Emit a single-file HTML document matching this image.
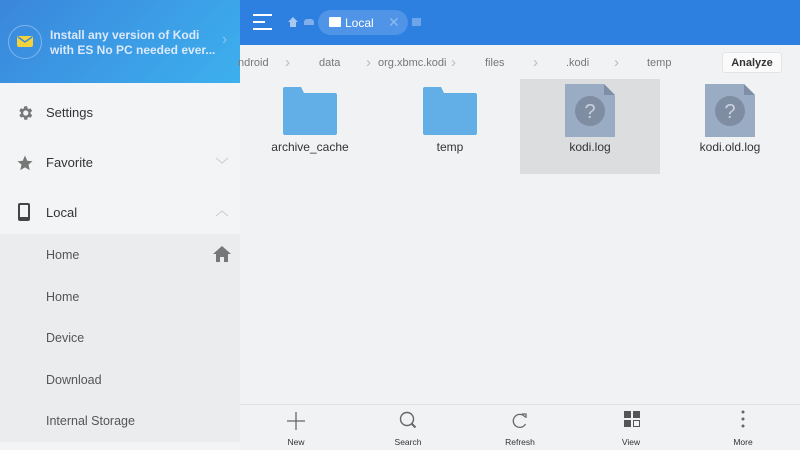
<!DOCTYPE html>
<html><head><style>
*{margin:0;padding:0;box-sizing:border-box}
body{width:800px;height:450px;overflow:hidden;font-family:"Liberation Sans",sans-serif;background:#f1f2f4;position:relative}
.abs{position:absolute}
#side{left:0;top:0;width:240px;height:450px;background:#f3f4f6}
#banner{left:0;top:0;width:240px;height:83px;background:linear-gradient(135deg,#3a86dc,#3db0ee)}
.item{position:absolute;left:0;width:240px;font-size:13px;color:#333}
.sub{position:absolute;left:0;width:240px;height:42px;background:#ebecee;color:#555;font-size:12.5px;padding-left:46px;line-height:42px}
#top{left:240px;top:0;width:560px;height:45px;background:#2d7fe0}
.crumb{position:absolute;top:57px;font-size:11px;color:#777}
.ch{position:absolute;top:54px;font-size:15px;color:#bbb}
.lbl{position:absolute;font-size:12px;color:#333;text-align:center;width:140px}
.btm{position:absolute;top:437px;font-size:8.5px;color:#333;width:60px;text-align:center}
</style></head><body>
<div id="side" class="abs"></div>
<div id="banner" class="abs">
 <div class="abs" style="left:8px;top:25px;width:34px;height:34px;border-radius:50%;border:1px solid rgba(255,255,255,.35)"></div>
 <div class="abs" style="left:17px;top:36px;width:16px;height:11px;background:#f2d33c;border-radius:2px"></div>
 <svg class="abs" style="left:17px;top:36px" width="16" height="11"><path d="M1 1 L8 6 L15 1" stroke="#3a86dc" stroke-width="1.4" fill="none"/></svg>
 <div class="abs" style="left:50px;top:28px;color:#dbe9fb;font-size:12px;font-weight:bold;line-height:15px">Install any version of Kodi<br>with ES No PC needed ever...</div>
 <div class="abs" style="left:222px;top:31px;color:#8cc3ef;font-size:16px">›</div>
</div>
<svg class="abs" style="left:16px;top:104px" width="18" height="18" viewBox="0 0 24 24"><path fill="#777" d="M19.4 13a7.5 7.5 0 000-2l2.1-1.6-2-3.5-2.5 1a7 7 0 00-1.7-1L15 3h-4l-.4 2.7a7 7 0 00-1.7 1l-2.5-1-2 3.5L6.6 11a7.5 7.5 0 000 2l-2.1 1.6 2 3.5 2.5-1a7 7 0 001.7 1L11 21h4l.4-2.7a7 7 0 001.7-1l2.5 1 2-3.5zM13 15.5a3.5 3.5 0 110-7 3.5 3.5 0 010 7z"/></svg>
<div class="item" style="top:105px;left:46px">Settings</div>
<svg class="abs" style="left:16px;top:154px" width="18" height="18" viewBox="0 0 24 24"><path fill="#777" d="M12 2l3 7 7 .6-5.3 4.6 1.6 7.3L12 17.8 5.7 21.5l1.6-7.3L2 9.6 9 9z"/></svg>
<div class="item" style="top:155px;left:46px">Favorite</div>
<svg class="abs" style="left:215px;top:157px" width="14" height="8"><path d="M1 1l6 5 6-5" stroke="#ccc" fill="none"/></svg>
<div class="abs" style="left:18px;top:203px;width:12px;height:18px;border:2px solid #444;border-radius:2px;border-bottom-width:4px"></div>
<div class="item" style="top:205px;left:46px">Local</div>
<svg class="abs" style="left:215px;top:209px" width="14" height="8"><path d="M1 7l6-5 6 5" stroke="#ccc" fill="none"/></svg>
<div class="sub" style="top:234px">Home</div>
<svg class="abs" style="left:212px;top:245px" width="20" height="18" viewBox="0 0 20 18"><path fill="#777" d="M10 1L1 9h3v8h4v-5h4v5h4V9h3z"/></svg>
<div class="sub" style="top:276px">Home</div>
<div class="sub" style="top:317px">Device</div>
<div class="sub" style="top:359px">Download</div>
<div class="sub" style="top:400px">Internal Storage</div>
<div id="top" class="abs">
 <div class="abs" style="left:13px;top:14px;width:19px;height:2px;background:#fff"></div>
 <div class="abs" style="left:13px;top:21px;width:12px;height:2px;background:#fff"></div>
 <div class="abs" style="left:13px;top:28px;width:19px;height:2px;background:#fff"></div>
 <svg class="abs" style="left:48px;top:17px" width="10" height="10"><path fill="#a9c9f2" d="M5 0L0 5h2v5h6V5h2z"/></svg>
 <div class="abs" style="left:64px;top:19px;width:10px;height:6px;background:#7fb0ec;border-radius:3px 3px 0 0"></div>
 <div class="abs" style="left:78px;top:10px;width:90px;height:25px;border-radius:13px;background:#4f94e6"></div>
 <div class="abs" style="left:89px;top:17px;width:12px;height:10px;background:#fff;border-radius:1px"></div>
 <div class="abs" style="left:105px;top:16px;color:#fff;font-size:12px">Local</div>
 <div class="abs" style="left:148px;top:14px;color:#8cbaf0;font-size:14px">✕</div>
 <div class="abs" style="left:172px;top:18px;width:9px;height:8px;background:#6ea5ea"></div>
</div>
<div class="crumb" style="left:238px">ndroid</div>
<div class="ch" style="left:285px">›</div>
<div class="crumb" style="left:319px">data</div>
<div class="ch" style="left:366px">›</div>
<div class="crumb" style="left:378px">org.xbmc.kodi</div>
<div class="ch" style="left:451px">›</div>
<div class="crumb" style="left:485px">files</div>
<div class="ch" style="left:533px">›</div>
<div class="crumb" style="left:566px">.kodi</div>
<div class="ch" style="left:614px">›</div>
<div class="crumb" style="left:647px">temp</div>
<div class="abs" style="left:722px;top:52px;width:60px;height:21px;background:#fafafa;border:1px solid #e4e4e4;border-radius:3px;font-size:11px;font-weight:bold;color:#333;text-align:center;line-height:20px">Analyze</div>
<div class="abs" style="left:520px;top:79px;width:140px;height:95px;background:#dcdddf"></div>
<svg class="abs" style="left:283px;top:87px" width="54" height="48"><path fill="#62aee6" d="M0 2a2 2 0 012-2h16l3 6h31a2 2 0 012 2v38a2 2 0 01-2 2H2a2 2 0 01-2-2z"/></svg>
<svg class="abs" style="left:423px;top:87px" width="54" height="48"><path fill="#62aee6" d="M0 2a2 2 0 012-2h16l3 6h31a2 2 0 012 2v38a2 2 0 01-2 2H2a2 2 0 01-2-2z"/></svg>
<svg class="abs" style="left:565px;top:84px" width="50" height="53"><path fill="#9aabc4" d="M0 0h39l11 11v42H0z"/><path fill="#7d8ea6" d="M39 0v11h11z"/><circle cx="25" cy="27" r="15" fill="#7f8da3"/><text x="25" y="34" font-size="20" fill="#c8d0dc" text-anchor="middle" font-family="Liberation Sans">?</text></svg>
<svg class="abs" style="left:705px;top:84px" width="50" height="53"><path fill="#9aabc4" d="M0 0h39l11 11v42H0z"/><path fill="#7d8ea6" d="M39 0v11h11z"/><circle cx="25" cy="27" r="15" fill="#7f8da3"/><text x="25" y="34" font-size="20" fill="#c8d0dc" text-anchor="middle" font-family="Liberation Sans">?</text></svg>
<div class="lbl" style="left:240px;top:140px">archive_cache</div>
<div class="lbl" style="left:380px;top:140px">temp</div>
<div class="lbl" style="left:520px;top:140px">kodi.log</div>
<div class="lbl" style="left:660px;top:140px">kodi.old.log</div>
<div class="abs" style="left:240px;top:404px;width:560px;height:1px;background:#e0e0e0"></div>
<svg class="abs" style="left:284px;top:409px" width="24" height="24"><path d="M12 3v18M3 12h18" stroke="#666" stroke-width="1.3"/></svg>
<svg class="abs" style="left:396px;top:409px" width="24" height="24"><circle cx="11" cy="10" r="6.5" stroke="#666" stroke-width="1.4" fill="none"/><path d="M15.5 14.5l4 4" stroke="#666" stroke-width="2"/></svg>
<svg class="abs" style="left:508px;top:409px" width="24" height="24"><path d="M17 8A6.5 6.5 0 1 0 17.5 15" stroke="#666" stroke-width="1.3" fill="none"/><path d="M14 5l4 0 0 4" stroke="#666" stroke-width="1.3" fill="none"/></svg>
<svg class="abs" style="left:620px;top:409px" width="24" height="24"><rect x="4" y="2" width="7" height="7" fill="#555"/><rect x="13" y="2" width="7" height="7" fill="#555"/><rect x="4" y="11" width="7" height="7" fill="#555"/><rect x="13.5" y="11.5" width="6" height="6" stroke="#555" fill="none"/></svg>
<svg class="abs" style="left:732px;top:409px" width="24" height="24"><circle cx="11" cy="3" r="1.5" fill="#666"/><circle cx="11" cy="10" r="1.5" fill="#666"/><circle cx="11" cy="17" r="1.5" fill="#666"/></svg>
<div class="btm" style="left:266px">New</div>
<div class="btm" style="left:378px">Search</div>
<div class="btm" style="left:490px">Refresh</div>
<div class="btm" style="left:601px">View</div>
<div class="btm" style="left:713px">More</div>
</body></html>
